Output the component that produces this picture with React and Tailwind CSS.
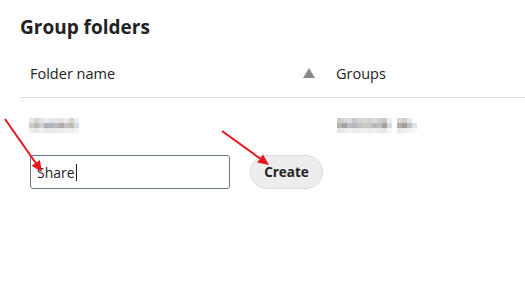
const nameBlur = [
  ['#e6e6e6', '#d8d8d8', '#e2e2e2', '#ececec', '#e4e4e4', '#e6e6e6', '#e4e4e4', '#ececec', '#d6d3d0', '#e8eef4'],
  ['#cbcbcb', '#bdb9b5', '#cecece', '#aeb0ba', '#b2b4bd', '#bbbbc2', '#b2aba9', '#c2c2c4', '#c4bbb2', '#d0dde8'],
  ['#eeeeee', '#e6e6e6', '#f0f0f0', '#e8e8ec', '#eaeaee', '#ececee', '#ebebeb', '#ededed', '#f0ecec', '#f2f6fa'],
];

const groupBlur = [
  ['#cccccc', '#d4d4d4', '#dcdcdc', '#c8c8cc', '#d6d6d6', '#dadada', '#d2d2d2', '#dadada', '#cfcfcf', '#c8c8c8', '#eeeeee', '#ffffff', '#d6d6d6', '#cfcfcf', '#e6e6e6', '#ffffff'],
  ['#b4b0ac', '#a89f9f', '#bcbec5', '#b4b8c1', '#c2c2c2', '#ccc8c4', '#c8c8c8', '#c0b7b3', '#bdbdc2', '#a89f9b', '#d6dbe2', '#ffffff', '#b4aba7', '#a39d9d', '#bfc3c9', '#dfe3e8'],
  ['#e6e6e6', '#eceaea', '#f0f0f2', '#ebebed', '#ededed', '#f2f0ee', '#ececec', '#eeeeee', '#eaeaea', '#e8e6e6', '#f6f6f8', '#ffffff', '#e8e8e8', '#eeeeee', '#f0f2f4', '#f6f8fa'],
];

function Blur({ rows }) {
  return (
    <div className="flex flex-col">
      {rows.map((r, i) => (
        <div key={i} className="flex">
          {r.map((c, j) => (
            <div key={j} className="w-[5px] h-[5px]" style={{ background: c }} />
          ))}
        </div>
      ))}
    </div>
  );
}

function Arrow({ x1, y1, x2, y2 }) {
  const ang = Math.atan2(y2 - y1, x2 - x1);
  const len = 11, w = 5;
  const bx = x2 - len * Math.cos(ang), by = y2 - len * Math.sin(ang);
  const px = -Math.sin(ang) * w, py = Math.cos(ang) * w;
  return (
    <g>
      <line x1={x1} y1={y1} x2={bx} y2={by} stroke="#e8141a" strokeWidth="2" />
      <polygon points={`${x2},${y2} ${bx + px},${by + py} ${bx - px},${by - py}`} fill="#e8141a" />
    </g>
  );
}

export default function App() {
  return (
    <div className="relative w-[525px] h-[294px] bg-white overflow-hidden font-['Open_Sans',sans-serif] text-[#222]">
      <div className="pl-5 pt-[13px]">
        <h2 className="text-[19px] font-bold leading-[28px] text-[#222]">Group folders</h2>

        {/* Header row */}
        <div className="flex items-center h-[48px] mt-[9px] border-b border-[#dedede] text-[14.5px] text-[#222]">
          <div className="w-[316px] pl-[10px] pr-[21px] flex items-center justify-between">
            <span>Folder name</span>
            <svg width="12" height="10" viewBox="0 0 12 10" className="mt-[-1px]">
              <polygon points="6,0 12,10 0,10" fill="#888" />
            </svg>
          </div>
          <span>Groups</span>
        </div>

        {/* Existing row (blurred) */}
        <div className="flex items-center h-[54px]">
          <div className="w-[317px] pl-[9px]"><Blur rows={nameBlur} /></div>
          <Blur rows={groupBlur} />
        </div>

        {/* New folder row */}
        <div className="flex items-center gap-5 pl-[10px] mt-[3px]">
          <div className="w-[200px] h-[34px] border border-[#6b7580] rounded-[3px] flex items-center px-[6px] text-[14px] text-[#222]">
            Share<span className="w-px h-[17px] bg-[#222] ml-px" />
          </div>
          <button className="h-[34px] w-[73px] rounded-full bg-[#ededed] border border-[#dbdbdb] text-[13.5px] font-bold text-[#222]">
            Create
          </button>
        </div>
      </div>

      <svg className="absolute inset-0 pointer-events-none" width="525" height="294">
        <Arrow x1={5} y1={119} x2={42} y2={172} />
        <Arrow x1={222} y1={131} x2={269} y2={165} />
      </svg>
    </div>
  );
}
